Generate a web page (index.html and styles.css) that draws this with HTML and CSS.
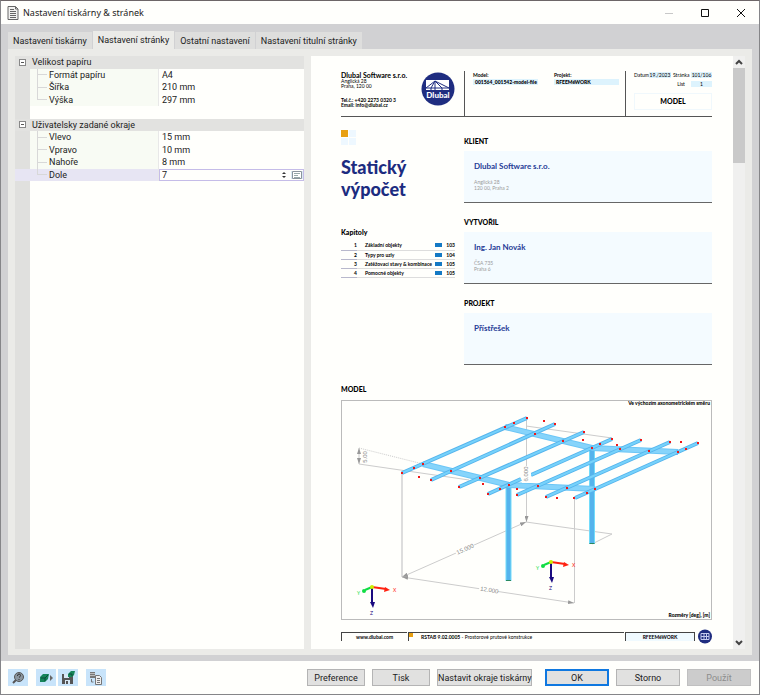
FILE: index.html
```html
<!DOCTYPE html>
<html lang="cs">
  <head>
    <meta charset="UTF-8" />
    <title>Nastavení tiskárny &amp; stránek</title>
    <link rel="stylesheet" href="styles.css">
  </head>
  <body>
    <header class="titlebar">
      <svg class="app-icon" width="12" height="14" viewBox="0 0 12 14">
        <path d="M1 .5h7.500l2.500 2.500v10.500H1z" fill="#f2f2f0" stroke="#666" />
        <path d="M8.500 .5v2.500H11M3 3.500h4M3 5.500h6M3 7.500h6M3 9.500h6M3 11.500h6" fill="none" stroke="#666" />
      </svg>
      <h1>Nastavení tiskárny &amp; stránek</h1>
      <div class="window-buttons">
        <button aria-label="Minimalizovat" disabled>
          <svg width="10" height="10"><path d="M1 5.500h8" stroke="#c8c8c8" /></svg>
        </button>
        <button aria-label="Maximalizovat">
          <svg width="10" height="10"><path d="M1.500 1.500h7v7h-7z" fill="none" stroke="#111" /></svg>
        </button>
        <button aria-label="Zavřít">
          <svg width="10" height="10"><path d="M1 1l8 8M9 1l-8 8" stroke="#111" /></svg>
        </button>
      </div>
    </header>

    <main class="workspace">
      <nav class="tabs">
        <button class="tab">Nastavení tiskárny</button>
        <button class="tab active">Nastavení stránky</button>
        <button class="tab">Ostatní nastavení</button>
        <button class="tab">Nastavení titulní stránky</button>
      </nav>

      <div class="panel">
        <section class="properties">
          <div class="tree">
            <div class="row group"><button class="toggle" aria-label="Sbalit"></button><span>Velikost papíru</span></div>
            <div class="row"><span class="name">Formát papíru</span><span class="value">A4</span></div>
            <div class="row"><span class="name">Šířka</span><span class="value">210 mm</span></div>
            <div class="row last"><span class="name">Výška</span><span class="value">297 mm</span></div>
            <div class="row empty"></div>
            <div class="row group"><button class="toggle" aria-label="Sbalit"></button><span>Uživatelsky zadané okraje</span></div>
            <div class="row"><span class="name">Vlevo</span><span class="value">15 mm</span></div>
            <div class="row"><span class="name">Vpravo</span><span class="value">10 mm</span></div>
            <div class="row"><span class="name">Nahoře</span><span class="value">8 mm</span></div>
            <div class="row last selected">
              <label class="name" for="bottom-margin">Dole</label>
              <div class="value editor">
                <input id="bottom-margin" type="text" value="7">
                <svg width="6" height="8"><path d="M1 3l2-2 2 2zM1 5l2 2 2-2z" fill="#333" /></svg>
                <button class="list-button" aria-label="Vybrat">
                  <svg width="10" height="8"><path d="M.5 .5h9v7h-9z" fill="#fff" stroke="#8a949c" /><path d="M2 2.500h6M2 4.500h4M2 6.500h6" stroke="#9aa" /></svg>
                </button>
              </div>
            </div>
          </div>
        </section>

        <section class="preview">
          <article class="page">
            <header class="page-head">
              <div class="company">
                <div>
                  <strong>Dlubal Software s.r.o.</strong>
                  <p>Anglická 28<br>Praha, 120 00</p>
                  <p class="contact">Tel.č.: +420 2273 0320 3<br>Email: info@dlubal.cz</p>
                </div>
                <svg class="logo" width="34" height="36" viewBox="0 0 34 36">
                  <circle cx="17" cy="18" r="16.500" fill="#1f2d80" />
                  <path d="M5 9h23v10H5z" fill="#fff" />
                  <path d="M5 17L14 10l14 7M14 10v9M14 10l7 7v2M14 10l-4 7v2M5 17h23" fill="none" stroke="#1f2d80" />
                  <text x="17" y="27" text-anchor="middle">Dlubal</text>
                </svg>
              </div>
              <div class="meta">
                <div><b>Model:</b><span class="field">001564_001542-model-file</span></div>
                <div><b>Projekt:</b><span class="field">RFEEMéWORK</span></div>
              </div>
              <div class="sheet">
                <div class="sheet-info">
                  <span>Datum</span><span class="field">19./2023</span><span>Stránka</span><span class="field">101/106</span>
                  <span></span><span></span><span>List</span><span class="field">1</span>
                </div>
                <strong class="sheet-name">MODEL</strong>
              </div>
            </header>

            <div class="page-body">
              <div class="left">
                <div class="squares"><i></i><i></i><i></i><i></i></div>
                <h2>Statický výpočet</h2>
                <h3>Kapitoly</h3>
                <table class="chapters">
                  <tr><td>1</td><td>Základní objekty</td><td><i></i></td><td>103</td></tr>
                  <tr><td>2</td><td>Typy pro uzly</td><td><i></i></td><td>104</td></tr>
                  <tr><td>3</td><td>Zatěžovací stavy &amp; kombinace</td><td><i></i></td><td>105</td></tr>
                  <tr><td>4</td><td>Pomocné objekty</td><td><i></i></td><td>105</td></tr>
                </table>
              </div>
              <div class="right">
                <section class="party">
                  <h3>KLIENT</h3>
                  <div class="card"><strong>Dlubal Software s.r.o.</strong><p>Anglická 28<br>120 00, Praha 2</p></div>
                </section>
                <section class="party">
                  <h3>VYTVOŘIL</h3>
                  <div class="card"><strong>Ing. Jan Novák</strong><p>ČSA 735<br>Praha 6</p></div>
                </section>
                <section class="party">
                  <h3>PROJEKT</h3>
                  <div class="card"><strong>Přístřešek</strong></div>
                </section>
              </div>
            </div>

            <h3 class="model-title">MODEL</h3>
            <svg class="model" viewBox="341 400 371 220">
              <defs>
                <marker id="arrow" viewBox="0 0 6 4" refX="6" refY="2" markerWidth="6" markerHeight="4" markerUnits="userSpaceOnUse" orient="auto-start-reverse">
                  <path d="M0 0l6 2-6 2z" fill="#999" />
                </marker>
                <g id="axes">
                  <path d="M0 0l14 2" stroke="#f21" stroke-width="2" />
                  <path d="M18 3l-6 2 1-5z" fill="#f21" />
                  <path d="M0 0l-7 3" stroke="#1d4" stroke-width="2" />
                  <circle cx="-8" cy="4" r="2" fill="#1d4" />
                  <path d="M0 0v16" stroke="#1a0a80" stroke-width="2" />
                  <path d="M-2 15h5l-2 6z" fill="#1a0a80" />
                  <circle r="2" fill="#ce0" />
                  <text x="21" y="5" fill="#f21">X</text>
                  <text x="-15" y="8" fill="#1d4">Y</text>
                  <text x="-2" y="28" fill="#1a0a80">Z</text>
                </g>
              </defs>
              <rect x="341.500" y="400.500" width="370" height="219" fill="none" stroke="#bbb" />

              <!-- dimension lines -->
              <g fill="none" stroke="#ccc">
                <path d="M359 448l64 16" stroke-dasharray="1 1" />
                <path d="M359 464l110 16" />
                <path d="M402 474v103" stroke="#ddd" stroke-width="2" />
                <path d="M526.500 418v102M574.500 499v104M526 426l86 12M526 522l86 12-20 10" />
                <path d="M359 448v16" marker-start="url(#arrow)" marker-end="url(#arrow)" />
                <path d="M402 577l124-55" marker-start="url(#arrow)" marker-end="url(#arrow)" />
                <path d="M402 577l172 26" marker-start="url(#arrow)" marker-end="url(#arrow)" />
                <path d="M526.500 505v17" marker-end="url(#arrow)" />
              </g>

              <!-- columns -->
              <path class="post-edge" d="M508.500 485v96M592 448v96" />
              <path class="post" d="M508.500 485v96M592 448v96" />
              <path d="M506 580.500h5M589.500 543.500h5" stroke="#2a8a60" />

              <!-- purlins and rafters -->
              <path class="purlin-edge" d="M423 464l86 21 86 4M505 427l87 21 86 4" />
              <path class="purlin" d="M423 464l86 21 86 4M505 427l87 21 86 4" />
              <path class="rafter-edge" d="M402 473l125-55M431 480l124-56M459 487l125-55M488 494l33-15M531 475l81-36M517 495l124-55M546 497l124-55M575 498l123-55" />
              <path class="rafter" d="M402 473l125-55M431 480l124-56M459 487l125-55M488 494l33-15M531 475l81-36M517 495l124-55M546 497l124-55M575 498l123-55" />

              <!-- nodes -->
              <path class="nodes" d="M402 473h0M414 468h0M423 464h0M419 477h0M431 480h0M451 471h0M459 487h0M480 478h0M483 484h0M488 494h0M500 489h0M509 485h0M517 495h0M517 489h0M527 418h0M514 423h0M505 427h0M544 421h0M555 424h0M535 434h0M584 432h0M563 441h0M583 440h0M612 439h0M600 444h0M592 448h0M617 445h0M620 449h0M641 440h0M649 451h0M670 442h0M681 442h0M698 443h0M686 449h0M678 452h0M538 486h0M567 488h0M546 497h0M557 498h0M574 498h0M587 493h0M595 489h0" />

              <g class="dims">
                <rect x="522" y="466" width="9" height="17" fill="#fffffc" />
                <rect x="455" y="545" width="20" height="7" fill="#fffffc" transform="rotate(-24 465 549)" />
                <rect x="479" y="587" width="19" height="7" fill="#fffffc" transform="rotate(9 489 590)" />
                <text transform="translate(367 457) rotate(-90)">5.00</text>
                <text transform="translate(528 474) rotate(-90)">6.000</text>
                <text transform="translate(466 551) rotate(-24)">15.000</text>
                <text transform="translate(489 592) rotate(9)">12.000</text>
              </g>

              <g class="axis-labels">
                <use href="#axes" x="372" y="587" />
                <use href="#axes" x="551" y="562" />
              </g>
              <g class="notes">
                <text x="710" y="405">Ve výchozím axonometrickém směru</text>
                <text x="710" y="617">Rozměry [deg], [m]</text>
              </g>
            </svg>

            <footer class="page-foot">
              <b class="site">www.dlubal.com</b>
              <span class="program"><i></i><b>RSTAB 9.02.0005</b> - Prostorové prutové konstrukce</span>
              <b class="project">RFEEMéWORK</b>
              <svg width="14" height="15" viewBox="0 0 14 15">
                <circle cx="7" cy="7.500" r="7" fill="#1f2d80" />
                <path d="M3 4.500h8v6H3zM3 7.500h8M6 4.500v6M8.500 4.500v6" fill="none" stroke="#c4cbee" />
              </svg>
            </footer>
          </article>
          <div class="scrollbar">
            <svg width="12" height="12"><path d="M3 8l3-3 3 3" fill="none" stroke="#444" stroke-width="2" /></svg>
            <div class="track"><div class="thumb"></div></div>
            <svg width="12" height="12"><path d="M3 4l3 3 3-3" fill="none" stroke="#444" stroke-width="2" /></svg>
          </div>
        </section>
      </div>
    </main>

    <footer class="actions">
      <div class="tools">
        <button class="tool" aria-label="Nápověda">
          <svg width="14" height="14"><path d="M5 9l-3 3" stroke="#555" stroke-width="2" /><circle cx="8" cy="6" r="4.500" fill="#8a959e" stroke="#555" /><path d="M6.500 5q0-2 1.500-2t1.500 1.500q0 1-1.500 2M8 8v1" fill="none" stroke="#333" /></svg>
        </button>
        <button class="tool gap" aria-label="Načíst výchozí">
          <svg width="14" height="14"><path d="M1 6l3-3h6l-1 5-3 3H1z" fill="#16855a" /><path d="M2 7h4v3M6 7l3-3" fill="none" stroke="#0b4d38" /><path d="M11 4l3 3-3 3z" fill="#666" /></svg>
        </button>
        <button class="tool" aria-label="Uložit jako výchozí">
          <svg width="14" height="14"><path d="M1 3h9l2 2v8H1z" fill="#555" /><path d="M3 3h5v4H3zM4 9h5v4H4z" fill="#d8e8f4" /><path d="M5 10h2v3H5z" fill="#555" /><path d="M7 3l3-3h4l-1 4-2 2H7z" fill="#16855a" /><path d="M8 3h3v2" fill="none" stroke="#0b4d38" /></svg>
        </button>
        <button class="tool gap" aria-label="Převzít nastavení">
          <svg width="14" height="14"><path d="M1 1h5v6H1z" fill="#777" /><path d="M1 2.500h5M1 4.500h5" stroke="#bbb" /><path d="M6.500 4.500h4l2 2v7h-6z" fill="#eee" stroke="#777" /><path d="M8 7.500h3M8 9.500h3M8 11.500h3M2.500 8v3h2" fill="none" stroke="#777" /></svg>
        </button>
      </div>
      <button class="btn">Preference</button>
      <button class="btn">Tisk</button>
      <button class="btn wide">Nastavit okraje tiskárny</button>
      <button class="btn main">OK</button>
      <button class="btn medium">Storno</button>
      <button class="btn medium" disabled>Použít</button>
    </footer>
  </body>
</html>
```

FILE: styles.css
```css
* {
  box-sizing: border-box;
}

body {
  display: flex;
  flex-direction: column;
  min-height: 100vh;
  margin: 0;
  border: 1px solid #858588;
  border-top-color: #6d6668;
  background: #fffffc;
  color: #222;
  font: 9px/12px Roboto, sans-serif;
}

h1,
h2,
h3,
p {
  margin: 0;
}

button,
input {
  margin: 0;
  padding: 0;
  border: none;
  background: none;
  color: inherit;
  font: inherit;
}

svg {
  display: block;
}

/* title bar */
.titlebar {
  display: flex;
  align-items: center;
  height: 23px;
  padding-left: 6px;
}

.titlebar h1 {
  flex: 1;
  margin-left: 4px;
  font: 9px/12px "Noto Sans", sans-serif;
}

.window-buttons {
  display: flex;
}

.window-buttons button {
  display: flex;
  justify-content: center;
  width: 36px;
}

/* tabs */
.workspace {
  display: flex;
  flex: 1;
  flex-direction: column;
  padding: 7px 7px 6px;
  background: #d1d1d3;
}

.tabs {
  display: flex;
  align-items: flex-end;
}

.tab {
  height: 17px;
  padding: 0 5px;
  border-right: 1px solid #d1d1d3;
  background: #dededd;
}

.tab.active {
  height: 18px;
  background: #ebebe8;
}

.panel {
  display: flex;
  flex: 1;
  gap: 7px;
  padding: 7px 7px 6px;
  background: #ebebe8;
}

/* property tree */
.properties {
  flex: 289;
  min-width: 0;
  background: linear-gradient(to right, #e0e0de 15px, #fffffc 15px);
}

.tree {
  display: grid;
  grid-template-columns: minmax(0, 1fr);
  grid-template-rows: repeat(10, 1fr);
  height: 125px;
}

.row {
  display: flex;
  align-items: center;
  padding-left: 15px;
}

.row.group {
  gap: 6px;
  padding-left: 4px;
  background: #e2e2e0;
}

.toggle {
  width: 7px;
  height: 7px;
  border: 1px solid #888;
  background: linear-gradient(#555, #555) center / 3px 1px no-repeat #fff;
}

.name {
  display: flex;
  align-items: center;
  align-self: stretch;
  width: 129px;
  padding-left: 7px;
  border-right: 1px solid #e8e8e8;
  background: #f8fbf4;
}

.name::before {
  content: "";
  align-self: stretch;
  width: 9px;
  margin-right: 2px;
  border-left: 1px solid #d8d8d8;
  background: linear-gradient(#d8d8d8, #d8d8d8) center / 100% 1px no-repeat;
}

.last .name::before {
  align-self: flex-start;
  height: 6px;
  background-position: bottom;
}

.value {
  flex: 1;
  min-width: 0;
  padding-left: 3px;
}

.selected,
.selected .name {
  background: #e7e5f3;
}

.editor {
  display: flex;
  align-items: center;
  align-self: stretch;
  gap: 4px;
  padding-left: 2px;
  border: 1px solid #c5bce8;
  background: #fffffc;
}

.editor input {
  flex: 1;
  min-width: 0;
  height: 10px;
  outline: none;
}

.list-button {
  padding: 0 1px;
  background: #dceaf4;
}

/* preview */
.preview {
  display: flex;
  flex: 434;
  min-width: 0;
  background: #fffffc;
}

.page {
  flex: 1;
  min-width: 0;
  padding: 15px 21px 0 30px;
  color: #000;
  font: 5px/6px Lato, sans-serif;
}

.page h3 {
  font-size: 7px;
  line-height: 10px;
  font-weight: 900;
}

.scrollbar {
  display: flex;
  flex-direction: column;
  width: 12px;
  background: #f0f0ef;
}

.track {
  flex: 1;
}

.thumb {
  height: 95px;
  background: #c9c9c9;
}

.page-head {
  display: grid;
  grid-template-columns: 123fr 161fr 87fr;
  height: 46px;
  border-bottom: 1px solid #555;
}

.company {
  display: flex;
  justify-content: space-between;
  padding-right: 9px;
}

.company strong {
  font-size: 7px;
  line-height: 8px;
}

.company p {
  line-height: 5px;
}

.company .contact {
  margin-top: 9px;
  font-weight: bold;
}

.logo text {
  fill: #fff;
  font-size: 8px;
  font-weight: 900;
}

.meta {
  display: grid;
  grid-template-columns: 1fr 1fr;
  gap: 16px;
  padding-left: 8px;
  padding-right: 6px;
  border-left: 1px solid #555;
}

.meta b {
  display: block;
  padding: 1px 0;
}

.field {
  background: #ddf3fd;
}

.meta .field {
  display: block;
  padding-left: 2px;
  font-weight: 900;
  white-space: nowrap;
}

.sheet {
  padding-left: 8px;
  border-left: 1px solid #555;
}

.sheet-info {
  display: grid;
  grid-template-columns: 13px 22px 16px 1fr;
  gap: 3px 2px;
  padding-top: 1px;
  text-align: center;
}

.sheet-info span {
  white-space: nowrap;
}

.sheet-name {
  display: block;
  margin-top: 6px;
  border: 1px solid #f0f8fc;
  font-size: 7px;
  line-height: 15px;
  font-weight: 900;
  text-align: center;
}

.page-body {
  display: grid;
  grid-template-columns: 114fr 248fr;
  gap: 9px;
}

.left {
  padding-top: 13px;
}

.squares {
  display: grid;
  grid-template-columns: 7px 7px;
  grid-auto-rows: 7px;
  gap: 1px;
}

.squares i {
  background: #eef8ff;
}

.squares i:first-child {
  background: #e8a012;
}

.page h2 {
  margin: 11px 0 27px;
  color: #1c2c80;
  font-size: 18px;
  line-height: 22px;
  font-weight: 900;
}

.chapters {
  width: 100%;
  margin-top: 4px;
  border-collapse: collapse;
  font-weight: bold;
}

.chapters td {
  height: 9px;
  padding: 0;
  border-bottom: 1px solid #ddd;
  white-space: nowrap;
}

.chapters td:first-child {
  width: 16px;
  border-color: #b8b8cc;
  text-align: right;
}

.chapters td:nth-child(2) {
  max-width: 76px;
  padding-left: 8px;
}

.chapters td:last-child {
  width: 13px;
  text-align: right;
}

.chapters i {
  display: block;
  width: 7px;
  height: 4px;
  background: #1479c4;
}

.right {
  padding-top: 19px;
}

.party {
  margin-bottom: 14px;
}

.card {
  height: 52px;
  margin-top: 5px;
  padding: 10px;
  border-bottom: 1px solid #666;
  background: #f4fbff;
}

.card strong {
  display: block;
  color: #1f3a96;
  font-size: 8px;
  line-height: 10px;
}

.card p {
  margin-top: 8px;
  color: #999;
}

.model-title {
  margin: 5px 0 6px;
}

/* model drawing */
.model {
  width: 100%;
}

.post-edge {
  fill: none;
  stroke: #72dcfb;
  stroke-width: 6;
}

.post {
  fill: none;
  stroke: #55b3ec;
  stroke-width: 4;
}

.purlin-edge {
  fill: none;
  stroke: #6cc6f6;
  stroke-width: 6;
}

.purlin {
  fill: none;
  stroke: #86d4fb;
  stroke-width: 4;
}

.rafter-edge {
  fill: none;
  stroke: #56b4ec;
  stroke-width: 4;
}

.rafter {
  fill: none;
  stroke: #76d2fb;
  stroke-width: 2;
}

.nodes {
  stroke: #f01818;
  stroke-width: 2;
  stroke-linecap: square;
}

.dims text {
  fill: #888;
  font: 6px "Liberation Sans", sans-serif;
  text-anchor: middle;
}

.axis-labels text {
  font: 6px "Liberation Sans", sans-serif;
}

.notes text {
  font-size: 5px;
  font-weight: 900;
  text-anchor: end;
}

.page-foot {
  display: grid;
  grid-template-columns: 66fr 216fr 72fr 14px;
  column-gap: 1px;
  margin-top: 9px;
}

.page-foot > b,
.page-foot > span {
  height: 9px;
  margin-top: 3px;
  border-top: 1px solid #444;
  border-left: 1px solid #444;
  line-height: 8px;
}

.site,
.project {
  text-align: center;
}

.page-foot .project {
  margin-right: 2px;
  border-right: 1px solid #444;
  background: #f0faff;
}

.program {
  display: flex;
  white-space: pre;
}

.program i {
  width: 4px;
  height: 4px;
  margin-right: 8px;
  background: #e8a012;
}

/* bottom buttons */
.actions {
  display: flex;
  align-items: center;
  gap: 7px;
  height: 33px;
  padding: 0 8px 0 7px;
}

.tools {
  display: flex;
  flex: 1;
  gap: 2px;
}

.tool {
  display: flex;
  align-items: center;
  justify-content: center;
  width: 20px;
  height: 17px;
  background: #c8e4fa;
}

.tool.gap {
  margin-left: 6px;
}

.btn {
  width: 58px;
  height: 17px;
  border: 1px solid #b4b4b4;
  background: #e1e1e0;
  white-space: nowrap;
}

.btn.medium {
  width: 64px;
}

.btn.wide {
  width: 95px;
}

.btn.main {
  width: 64px;
  margin-left: 6px;
  border: 2px solid #0f78e0;
}

.btn:disabled {
  border-color: #c0c0c0;
  background: #ccc;
  color: #8c8c8c;
}
```
